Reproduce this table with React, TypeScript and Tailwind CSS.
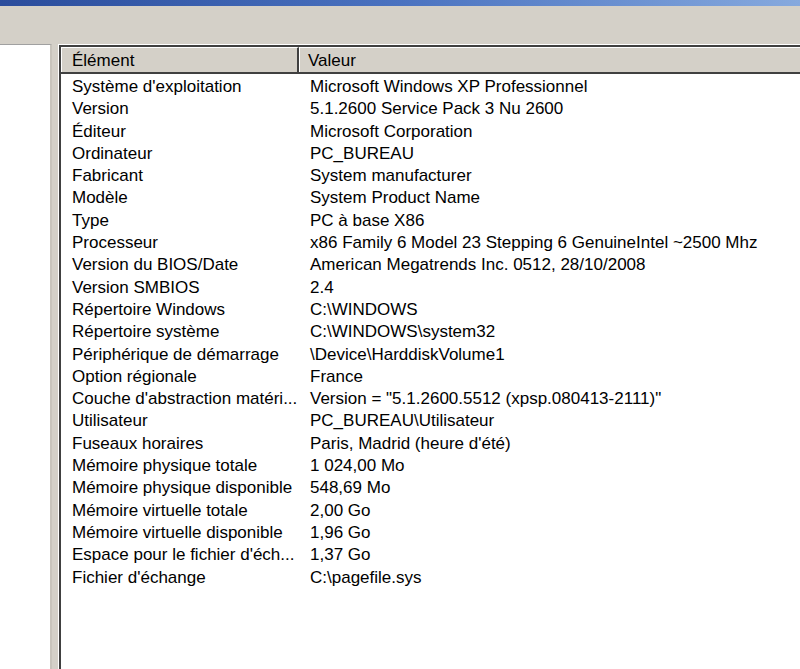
import React from "react";

const rows: [string, string][] = [
  ["Système d'exploitation", "Microsoft Windows XP Professionnel"],
  ["Version", "5.1.2600 Service Pack 3 Nu 2600"],
  ["Éditeur", "Microsoft Corporation"],
  ["Ordinateur", "PC_BUREAU"],
  ["Fabricant", "System manufacturer"],
  ["Modèle", "System Product Name"],
  ["Type", "PC à base X86"],
  ["Processeur", "x86 Family 6 Model 23 Stepping 6 GenuineIntel ~2500 Mhz"],
  ["Version du BIOS/Date", "American Megatrends Inc. 0512, 28/10/2008"],
  ["Version SMBIOS", "2.4"],
  ["Répertoire Windows", "C:\\WINDOWS"],
  ["Répertoire système", "C:\\WINDOWS\\system32"],
  ["Périphérique de démarrage", "\\Device\\HarddiskVolume1"],
  ["Option régionale", "France"],
  ["Couche d'abstraction matéri...", 'Version = "5.1.2600.5512 (xpsp.080413-2111)"'],
  ["Utilisateur", "PC_BUREAU\\Utilisateur"],
  ["Fuseaux horaires", "Paris, Madrid (heure d'été)"],
  ["Mémoire physique totale", "1 024,00 Mo"],
  ["Mémoire physique disponible", "548,69 Mo"],
  ["Mémoire virtuelle totale", "2,00 Go"],
  ["Mémoire virtuelle disponible", "1,96 Go"],
  ["Espace pour le fichier d'éch...", "1,37 Go"],
  ["Fichier d'échange", "C:\\pagefile.sys"],
];

export default function App() {
  return (
    <div
      className="w-[800px] h-[669px] overflow-hidden bg-[#d4d0c8] flex flex-col text-black"
      style={{ fontFamily: '"Liberation Sans", Arial, sans-serif' }}
    >
      <div className="h-[6px] shrink-0 bg-gradient-to-r from-[#2a4c9c] via-[#4a72c0] to-[#86a9de]" />
      <div className="h-[38px] shrink-0 bg-[#d4d0c8]" />
      <div className="flex flex-1 min-h-0">
        <div className="w-[52px] shrink-0 bg-white border-t border-[#a0a0a0] border-r-2 border-r-[#c8c4bc]" />
        <div className="w-[6px] shrink-0" />
        <div className="flex-1 flex flex-col border-l border-t border-white">
          <div className="flex-1 flex flex-col border-l-2 border-t-2 border-[#404040] bg-white">
            <div className="flex h-[27px] shrink-0 bg-[#d4d0c8] border-b-2 border-[#404040] text-[17px] leading-[24px]">
              <div className="w-[238px] shrink-0 border-r-2 border-[#404040] border-l border-l-white border-t border-t-white pl-[10px] pt-[1px]">
                Élément
              </div>
              <div className="flex-1 border-l border-white border-t border-t-white pl-[8px] pt-[1px]">Valeur</div>
            </div>
            <div className="pt-[2px] text-[17px]">
              {rows.map(([k, v]) => (
                <div key={k} className="flex h-[22.3px] leading-[22px] whitespace-nowrap">
                  <div className="w-[249px] shrink-0 pl-[11px]">{k}</div>
                  <div>{v}</div>
                </div>
              ))}
            </div>
          </div>
        </div>
      </div>
    </div>
  );
}
